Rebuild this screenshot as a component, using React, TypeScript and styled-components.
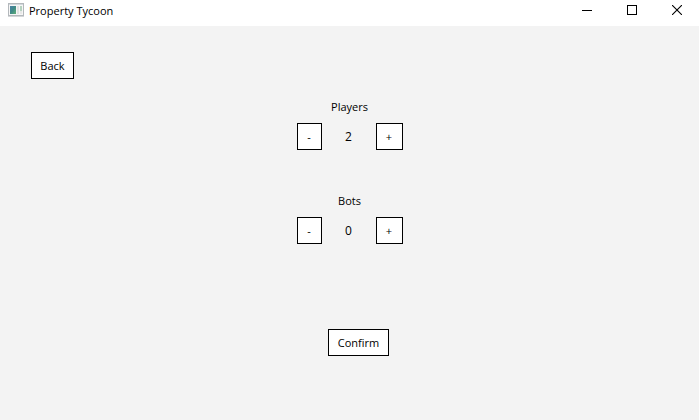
import React, { useState } from 'react';
import styled, { createGlobalStyle } from 'styled-components';

const GlobalStyle = createGlobalStyle`
  *, *::before, *::after { box-sizing: border-box; }
  body {
    margin: 0;
    background: #f3f3f3;
    color: #000;
    font: 11px/16px "Open Sans", "Noto Sans", sans-serif;
  }
`;

const Window = styled.div`
  display: flex;
  flex-direction: column;
  min-height: 100vh;
`;

const TitleBar = styled.header`
  display: flex;
  align-items: center;
  height: 26px;
  padding: 0 0 6px 8px;
  background: #fff;
`;

const Title = styled.h1`
  flex: 1;
  margin: 0 0 0 5px;
  padding-top: 2px;
  font: inherit;
`;

const WindowButton = styled.button`
  display: flex;
  align-items: center;
  justify-content: center;
  width: 45px;
  height: 20px;
  padding: 0;
  border: 0;
  background: transparent;
  color: #000;
`;

const Content = styled.main`
  display: flex;
  flex-direction: column;
  align-items: center;
  padding: 26px 31px;
`;

const Button = styled.button<{ $width: number }>`
  width: ${({ $width }) => $width}px;
  height: 27px;
  padding: 0;
  border: 1px solid #000;
  border-radius: 0;
  background: #fff;
  color: #000;
  font: inherit;
`;

const Navigation = styled.nav`
  align-self: stretch;
`;

const Counters = styled.div`
  display: grid;
  gap: 26px;
  margin-top: 20px;
`;

const CounterGroup = styled.section`
  display: grid;
  gap: 8px;
  width: 106px;
  padding-bottom: 17px;
`;

const CounterLabel = styled.h2`
  margin: 0;
  font: inherit;
  text-align: center;
`;

const CounterRow = styled.div`
  display: grid;
  grid-template-columns: 25px 1fr 27px;
  align-items: center;
`;

const Value = styled.output`
  font-size: 12px;
  text-align: center;
`;

const Actions = styled.footer`
  margin-top: 68px;
  padding-left: 18px;
`;

function AppIcon() {
  return (
    <svg width="16" height="14" viewBox="0 0 16 14" aria-hidden="true">
      <defs>
        <linearGradient id="pane" x1="0" y1="0" x2="1" y2="1">
          <stop offset="0" stopColor="#4a7fa8" />
          <stop offset="0.5" stopColor="#3f8a86" />
          <stop offset="1" stopColor="#62b078" />
        </linearGradient>
      </defs>
      <rect x="0.5" y="0.5" width="15" height="12" fill="#f6f6f6" stroke="#b4b8bc" />
      <rect x="1" y="1" width="14" height="1" fill="#d3d9de" />
      <rect x="2" y="3" width="6" height="8" fill="url(#pane)" />
      <rect x="9" y="3" width="2" height="8" fill="#e2e2e2" />
      <rect x="12" y="3" width="2" height="5" fill="#b5d2c0" />
      <rect x="12" y="8" width="2" height="3" fill="#e8e8e8" />
      <rect x="0" y="13" width="16" height="1" fill="#d4d6d8" />
    </svg>
  );
}

type CounterProps = { label: string; initial: number };

function Counter({ label, initial }: CounterProps) {
  const [count, setCount] = useState(initial);
  const labelId = `${label.toLowerCase()}-label`;
  return (
    <CounterGroup aria-labelledby={labelId}>
      <CounterLabel id={labelId}>{label}</CounterLabel>
      <CounterRow>
        <Button $width={25} aria-label={`Fewer ${label}`} onClick={() => setCount(Math.max(0, count - 1))}>-</Button>
        <Value aria-labelledby={labelId}>{count}</Value>
        <Button $width={27} aria-label={`More ${label}`} onClick={() => setCount(count + 1)}>+</Button>
      </CounterRow>
    </CounterGroup>
  );
}

export default function App() {
  return (
    <Window>
      <GlobalStyle />
      <TitleBar>
        <AppIcon />
        <Title>Property Tycoon</Title>
        <WindowButton aria-label="Minimize">
          <svg width="10" height="10" shapeRendering="crispEdges"><path d="M0 5.5H10" stroke="currentColor" /></svg>
        </WindowButton>
        <WindowButton aria-label="Maximize">
          <svg width="10" height="10" shapeRendering="crispEdges"><rect x="0.5" y="0.5" width="9" height="9" fill="none" stroke="currentColor" /></svg>
        </WindowButton>
        <WindowButton aria-label="Close">
          <svg width="10" height="10"><path d="M0 0L10 10M10 0L0 10" stroke="currentColor" strokeWidth="1.1" /></svg>
        </WindowButton>
      </TitleBar>
      <Content>
        <Navigation>
          <Button $width={43}>Back</Button>
        </Navigation>
        <Counters>
          <Counter label="Players" initial={2} />
          <Counter label="Bots" initial={0} />
        </Counters>
        <Actions>
          <Button $width={61}>Confirm</Button>
        </Actions>
      </Content>
    </Window>
  );
}
